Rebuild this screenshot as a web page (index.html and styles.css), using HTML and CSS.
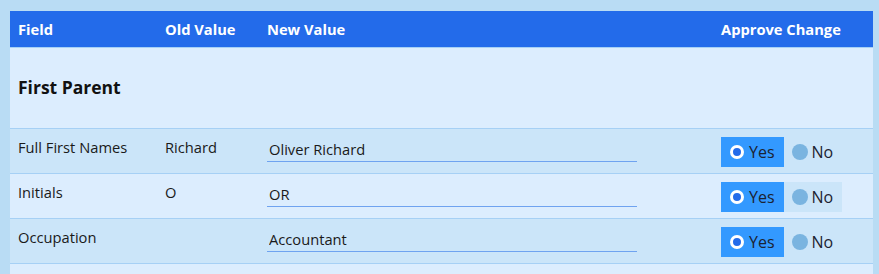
FILE: index.html
```html
<!DOCTYPE html>
<html lang="en">
<head>
    <meta charset="UTF-8">
    <meta name="viewport" content="width=device-width, initial-scale=1.0">
    <title>Approve Changes</title>

    <link rel="stylesheet" href="styles.css">
</head>
<body>

    <table class="changes">
        <thead>
            <tr>
                <th class="col-field">Field</th>
                <th class="col-old">Old Value</th>
                <th class="col-new">New Value</th>
                <th class="col-approve">Approve Change</th>
            </tr>
        </thead>
        <tbody>
            <tr class="section">
                <td colspan="4">First Parent</td>
            </tr>
            <tr>
                <td>Full First Names</td>
                <td>Richard</td>
                <td><input class="new-value" type="text" value="Oliver Richard"></td>
                <td>
                    <label class="choice checked"><span class="dot"></span>Yes</label><label class="choice"><span class="dot"></span>No</label>
                </td>
            </tr>
            <tr>
                <td>Initials</td>
                <td>O</td>
                <td><input class="new-value" type="text" value="OR"></td>
                <td>
                    <label class="choice checked"><span class="dot"></span>Yes</label><label class="choice hover"><span class="dot"></span>No</label>
                </td>
            </tr>
            <tr>
                <td>Occupation</td>
                <td></td>
                <td><input class="new-value" type="text" value="Accountant"></td>
                <td>
                    <label class="choice checked"><span class="dot"></span>Yes</label><label class="choice"><span class="dot"></span>No</label>
                </td>
            </tr>
            <tr class="empty">
                <td colspan="4"></td>
            </tr>
        </tbody>
    </table>

</body>
</html>
```

FILE: styles.css
```css
body {
    font-family: "Open Sans", Arial, sans-serif;
    font-size: 14.7px;
    color: #1a1a1a;
    background-color: #b9dcf4;
    margin: 0;
    padding: 11px 0 0 10px;
}

/* Table */
.changes {
    width: 863px;
    border-collapse: collapse;
    background: #dcedfe;
}

.changes th {
    background-color: #236bea;
    color: white;
    font-weight: bold;
    text-align: left;
    height: 36px;
    padding: 0 8px;
    border-bottom: 1px solid #a6d0f5;
}

.col-field { width: 131px; }
.col-old { width: 86px; }
.col-new { width: 438px; }

.changes td {
    padding: 8px 8px 6px 8px;
    vertical-align: top;
    line-height: 20px;
    border-bottom: 1px solid #a6d0f5;
}

.changes tbody tr:nth-child(even) {
    background: #cbe5f9;
}

.section td {
    height: 66px;
    padding-top: 6px;
    padding-bottom: 8px;
    vertical-align: middle;
    font-size: 17.5px;
    font-weight: bold;
    color: #111;
}

.empty td {
    height: 20px;
    border-bottom: none;
}

/* Inputs */
.new-value {
    font-family: inherit;
    font-size: 14.7px;
    color: #1a1a1a;
    width: 370px;
    box-sizing: border-box;
    margin: 3px 0 0 0;
    padding: 0 2px 3px 2px;
    height: 22px;
    background: transparent;
    border: none;
    border-bottom: 1px solid #6fa3f0;
    outline: none;
}

/* Radio choices */
.choice {
    display: inline-flex;
    align-items: center;
    gap: 4px;
    height: 30px;
    padding: 0 9px 0 8px;
    font-size: 16px;
    color: #1c2230;
    cursor: pointer;
    vertical-align: top;
}

.choice .dot {
    width: 16px;
    height: 16px;
    border-radius: 50%;
    background: #7ab4e0;
    box-sizing: border-box;
}

.choice.checked {
    background: #3399ff;
    padding-left: 9px;
}

.choice.checked .dot {
    width: 14px;
    height: 14px;
    background: #236bea;
    border: 3px solid white;
    margin-right: 1px;
}

.choice.hover {
    background: #cbe5f9;
}
```
